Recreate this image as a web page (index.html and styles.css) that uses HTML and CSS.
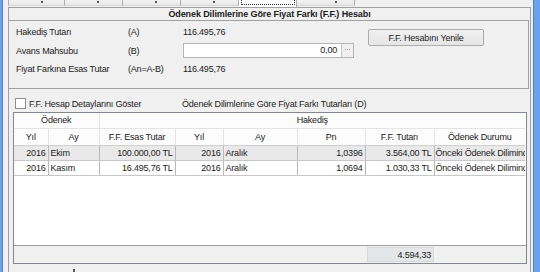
FILE: index.html
```html
<!DOCTYPE html>
<html lang="tr">
<head>
  <meta charset="UTF-8" />
  <title>Ödenek Dilimlerine Göre Fiyat Farkı</title>
  <link rel="stylesheet" href="styles.css">
</head>
<body>
  <div class="window">
    <div class="frame frame-left"></div>

    <div class="client">
      <div class="tabs">
        <div class="tab tab-first"><span class="tab-mark"></span></div>
        <div class="tab"><span class="tab-mark"></span></div>
        <div class="tab"><span class="tab-mark"></span></div>
        <div class="tab"><span class="tab-mark"></span></div>
        <div class="tab tab-active"><span class="tab-focus"></span></div>
        <div class="tab tab-last"><span class="tab-mark"></span></div>
      </div>

      <div class="page">
        <div class="page-title">Ödenek Dilimlerine Göre Fiyat Farkı (F.F.) Hesabı</div>

        <div class="summary">
          <div class="summary-grid">
            <span>Hakediş Tutarı</span>
            <span>(A)</span>
            <span>116.495,76</span>

            <span>Avans Mahsubu</span>
            <span>(B)</span>
            <div class="edit">
              <span class="edit-value">0,00</span>
              <span class="edit-btn">···</span>
            </div>

            <span>Fiyat Farkına Esas Tutar</span>
            <span>(An=A-B)</span>
            <span>116.495,76</span>
          </div>
          <button class="refresh-btn">F.F. Hesabını Yenile</button>
        </div>

        <div class="details">
          <div class="details-bar">
            <label class="check"><span class="check-box"></span>F.F. Hesap Detaylarını Göster</label>
            <span class="details-caption">Ödenek Dilimlerine Göre Fiyat Farkı Tutarları (D)</span>
          </div>

          <div class="grid">
            <table class="grid-table">
              <colgroup>
                <col style="width:34px">
                <col style="width:51px">
                <col style="width:76px">
                <col style="width:48px">
                <col style="width:74px">
                <col style="width:68px">
                <col style="width:69px">
                <col style="width:91px">
              </colgroup>
              <tr class="band-row">
                <th colspan="2">Ödenek</th>
                <th colspan="6">Hakediş</th>
              </tr>
              <tr class="head-row">
                <th>Yıl</th>
                <th>Ay</th>
                <th>F.F. Esas Tutar</th>
                <th>Yıl</th>
                <th>Ay</th>
                <th>Pn</th>
                <th>F.F. Tutarı</th>
                <th>Ödenek Durumu</th>
              </tr>
              <tr class="data-row selected">
                <td class="num">2016</td>
                <td>Ekim</td>
                <td class="num">100.000,00 TL</td>
                <td class="num">2016</td>
                <td>Aralık</td>
                <td class="num">1,0396</td>
                <td class="num">3.564,00 TL</td>
                <td class="clip">Önceki Ödenek Diliminde</td>
              </tr>
              <tr class="data-row">
                <td class="num">2016</td>
                <td>Kasım</td>
                <td class="num">16.495,76 TL</td>
                <td class="num">2016</td>
                <td>Aralık</td>
                <td class="num">1,0694</td>
                <td class="num">1.030,33 TL</td>
                <td class="clip">Önceki Ödenek Diliminde</td>
              </tr>
            </table>
            <div class="grid-empty"></div>
            <div class="grid-footer">
              <span class="footer-cell">4.594,33</span>
            </div>
          </div>

          <div class="below"><span class="below-mark"></span></div>
        </div>
      </div>
    </div>

    <div class="frame frame-right"></div>
  </div>
</body>
</html>
```

FILE: styles.css
```css
* {
  box-sizing: border-box;
}

html, body {
  margin: 0;
  padding: 0;
}

body {
  width: 540px;
  height: 272px;
  overflow: hidden;
  background: #f0f0f0;
  font-family: "Liberation Sans", Arial, sans-serif;
  font-size: 9px;
  letter-spacing: -0.2px;
  color: #1b1b1b;
}

.window {
  display: flex;
  height: 272px;
}

.frame-left {
  width: 3px;
  background: #6fa3e6;
  border-right: 1px solid #4f86d0;
}

.frame-right {
  width: 7px;
  background: #6aa3ea;
  border-left: 1px solid #4a82cc;
}

.client {
  flex: 1;
  display: flex;
  flex-direction: column;
  padding: 0 2px 0 5px;
}

/* tab strip, only the bottom of it is visible */
.tabs {
  display: flex;
  height: 7px;
}

.tab {
  width: 58px;
  height: 6px;
  background: linear-gradient(#f3f3f3, #e6e6e6);
  border-right: 1px solid #acacac;
  border-bottom: 1px solid #d8d8d8;
  padding-left: 32px;
}

.tab-first {
  width: 57px;
  border-left: 1px solid #acacac;
}

.tab-last {
  padding-left: 38px;
}

.tab-mark {
  display: block;
  width: 2px;
  height: 2px;
  margin-top: 1px;
  background: #555;
}

.tab-active {
  height: 7px;
  background: #fff;
  border-bottom: none;
  padding: 0 1px 0 2px;
}

.tab-focus {
  display: block;
  height: 5px;
  border: 1px dotted #333;
  border-top: none;
}

.page {
  flex: 1;
  border: 1px solid #a0a0a0;
  border-bottom: none;
  background: #f0f0f0;
}

.page-title {
  height: 12px;
  line-height: 12px;
  text-align: center;
  font-weight: bold;
  letter-spacing: -0.1px;
}

.summary {
  display: flex;
  align-items: flex-start;
  height: 69px;
  margin-right: 1px;
  padding: 2px 0 0 7px;
  border-top: 1px solid #a0a0a0;
  border-bottom: 1px solid #a0a0a0;
  border-right: 1px solid #a0a0a0;
}

.summary-grid {
  display: grid;
  grid-template-columns: 112px 55px 171px;
  grid-template-rows: 18px 19px 18px;
  align-items: center;
}

.edit {
  display: flex;
  height: 15px;
  border: 1px solid #b5b5b5;
  background: #fff;
}

.edit-value {
  flex: 1;
  text-align: right;
  line-height: 13px;
  padding-right: 4px;
}

.edit-btn {
  width: 12px;
  border-left: 1px solid #c4c4c4;
  background: #f0f0f0;
  font-size: 7px;
  line-height: 11px;
  text-align: center;
  color: #444;
}

.refresh-btn {
  margin: 6px 0 0 14px;
  width: 116px;
  height: 17px;
  padding: 0;
  border: 1px solid #acacac;
  border-radius: 2px;
  background: linear-gradient(#f0f0f0, #e5e5e5);
  font-family: "Liberation Sans", Arial, sans-serif;
  font-size: 9px;
  letter-spacing: -0.2px;
  color: #1b1b1b;
}

.details {
  padding: 0 3px 0 4px;
}

.details-bar {
  display: flex;
  align-items: center;
  height: 23px;
  padding-top: 9px;
  padding-bottom: 3px;
}

.check {
  display: flex;
  align-items: center;
  width: 169px;
}

.check-box {
  width: 11px;
  height: 11px;
  margin: 0 3px 0 2px;
  border: 1px solid #8f8f8f;
  background: #fff;
}

.grid {
  display: flex;
  flex-direction: column;
  height: 152px;
  border: 1px solid #828790;
  background: #fff;
}

.grid-table {
  width: 511px;
  table-layout: fixed;
  border-collapse: collapse;
}

.grid-table th,
.grid-table td {
  padding: 0 2px;
  font-weight: normal;
  white-space: nowrap;
  overflow: hidden;
}

.grid-table th {
  background: #fcfcfc;
  border-right: 1px solid #e4e4e4;
  border-bottom: 1px solid #e4e4e4;
  text-align: center;
}

.band-row {
  height: 15px;
}

.head-row {
  height: 17px;
}

.head-row th {
  border-bottom-color: #d0d0d0;
}

.data-row {
  height: 15px;
}

.data-row td {
  border-right: 1px solid #b9b9b9;
  border-bottom: 1px solid #c8c8c8;
}

.data-row.selected td {
  background: #e9e9e9;
}

.grid-table td.num {
  text-align: right;
}

.grid-table td.clip {
  text-overflow: clip;
  padding: 0 0 0 1px;
}

.grid-table tr > :last-child {
  border-right: none;
}

.grid-empty {
  flex: 1;
}

.grid-footer {
  height: 18px;
  border-top: 1px solid #a0a0a0;
  background: #f0f0f0;
  padding: 1px 0 0 353px;
}

.footer-cell {
  display: block;
  width: 67px;
  height: 15px;
  line-height: 14px;
  padding-right: 2px;
  text-align: right;
  background: #e4e6e9;
  border: 1px solid #d6d8db;
}

.below {
  padding: 5px 0 0 60px;
}

.below-mark {
  display: block;
  width: 2px;
  height: 3px;
  background: #555;
}
```
